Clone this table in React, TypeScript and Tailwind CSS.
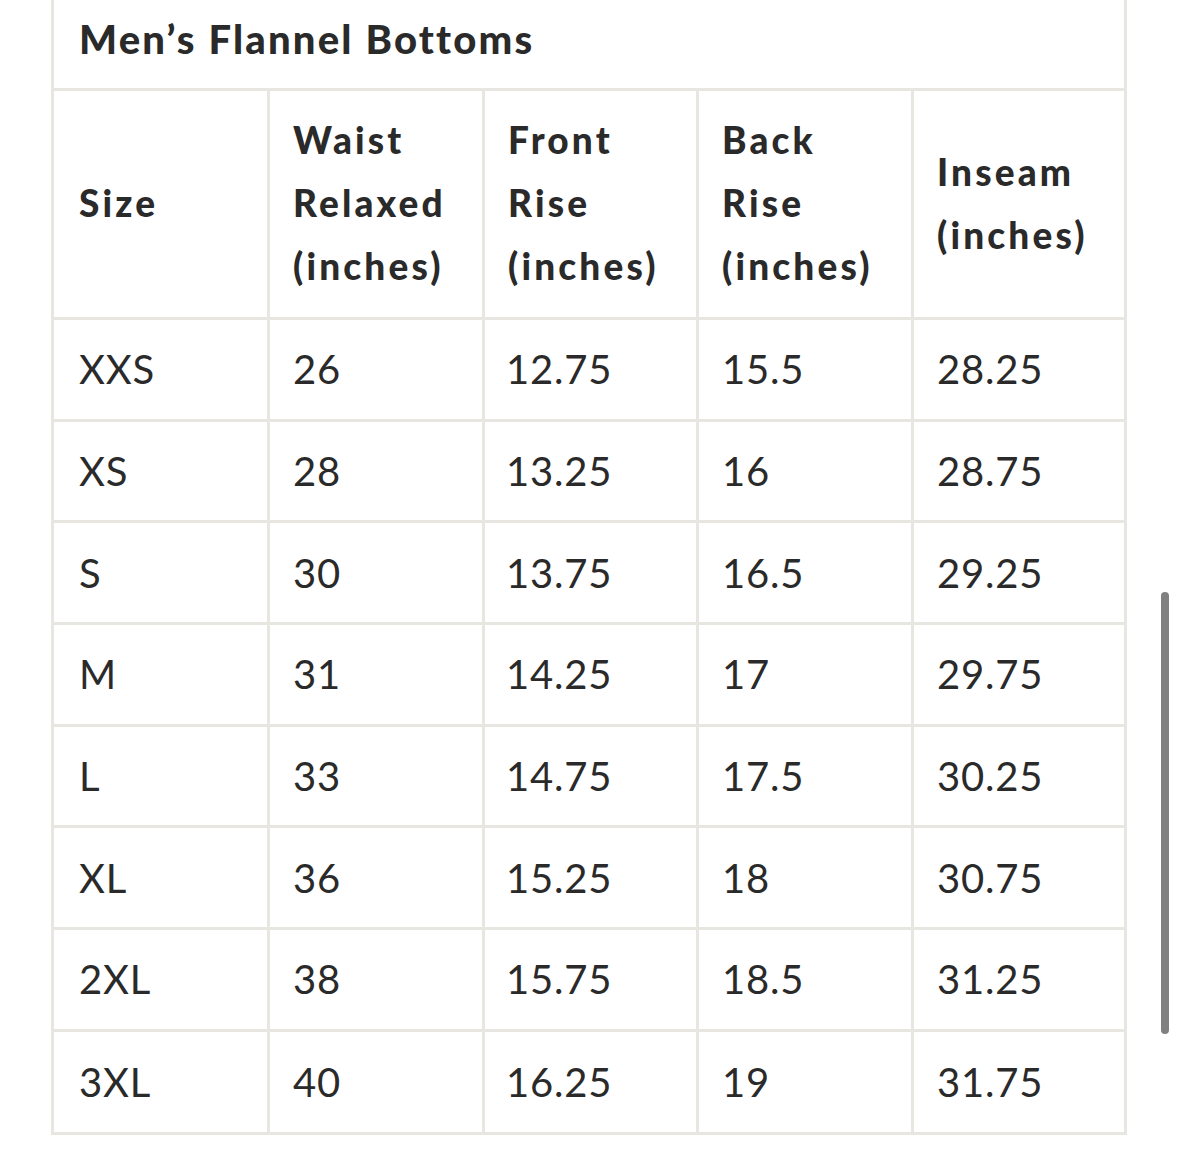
const rows = [
  ['XXS', '26', '12.75', '15.5', '28.25'],
  ['XS', '28', '13.25', '16', '28.75'],
  ['S', '30', '13.75', '16.5', '29.25'],
  ['M', '31', '14.25', '17', '29.75'],
  ['L', '33', '14.75', '17.5', '30.25'],
  ['XL', '36', '15.25', '18', '30.75'],
  ['2XL', '38', '15.75', '18.5', '31.25'],
  ['3XL', '40', '16.25', '19', '31.75'],
];

const headerLines: string[][] = [
  ['Size'],
  ['Waist', 'Relaxed', '(inches)'],
  ['Front', 'Rise', '(inches)'],
  ['Back', 'Rise', '(inches)'],
  ['Inseam', '(inches)'],
];

const cols = 'grid grid-cols-[216px_215px_214px_215px_1fr]';

export default function App() {
  return (
    <div className="relative w-[1179px] h-[1157px] bg-white overflow-hidden text-[#2a2a2a]" style={{ fontFamily: 'Lato, "Liberation Sans", sans-serif' }}>
      <div className="ml-[51px] w-[1076px] border-x-[3px] border-b-[3px] border-[#e8e6e0]">
        {/* Title */}
        <div className="h-[91px] border-b-[3px] border-[#e8e6e0] pl-[25px] pt-[13px]">
          <h1 className="text-[40px] font-black tracking-[0.055em] leading-[52px]">Men’s Flannel Bottoms</h1>
        </div>

        {/* Header */}
        <div className={`${cols} h-[229px] border-b-[3px] border-[#e8e6e0]`}>
          {headerLines.map((lines, i) => (
            <div
              key={i}
              className={`flex flex-col justify-center pb-[3px] ${i === 0 ? 'pl-[25px]' : 'pl-[23px]'} ${i < 4 ? 'border-r-[3px] border-[#e8e6e0]' : ''}`}
            >
              {lines.map((l) => (
                <div key={l} className="text-[37px] font-black tracking-[0.085em] leading-[63px]">{l}</div>
              ))}
            </div>
          ))}
        </div>

        {/* Rows */}
        {rows.map((row, r) => (
          <div
            key={row[0]}
            className={`${cols} ${r < rows.length - 1 ? 'h-[101.7px] border-b-[3px] border-[#e8e6e0]' : 'h-[100px]'}`}
          >
            {row.map((cell, i) => (
              <div
                key={i}
                className={`flex items-center ${i === 0 ? 'pl-[25px]' : i === 2 ? 'pl-[21px]' : 'pl-[23px]'} text-[40px] tracking-[0.02em] ${i < 4 ? 'border-r-[3px] border-[#e8e6e0]' : ''}`}
              >
                {cell}
              </div>
            ))}
          </div>
        ))}
      </div>

      {/* scroll indicator */}
      <div className="absolute left-[1161px] top-[592px] w-[8px] h-[442px] rounded-full bg-[#808080]" />
    </div>
  );
}
